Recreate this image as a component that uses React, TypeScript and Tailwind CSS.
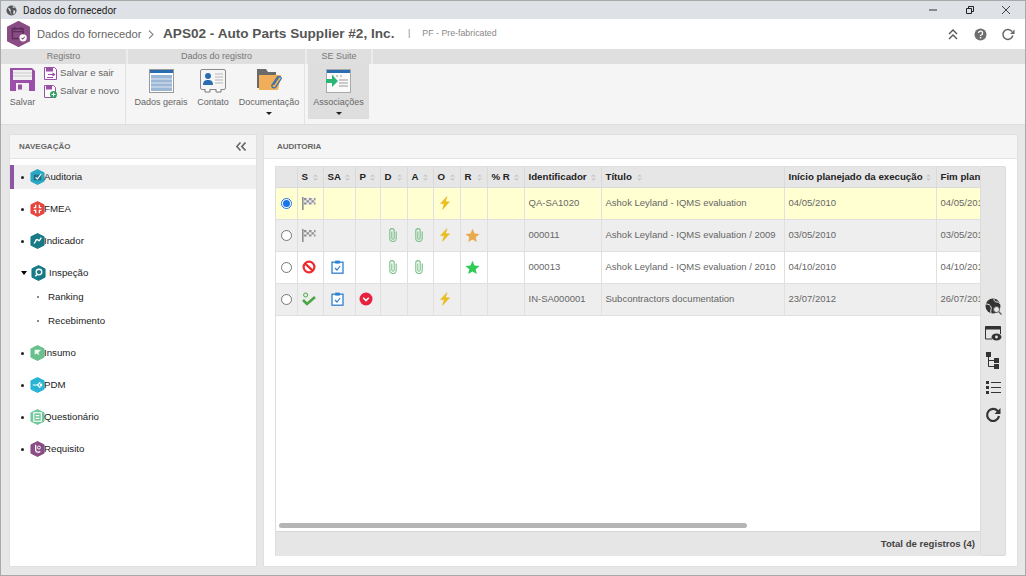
import React from "react";

const Hex = ({ c, size = 15, children }: { c: string; size?: number; children?: React.ReactNode }) => (
  <svg width={size} height={size + 1} viewBox="0 0 16 17" className="shrink-0">
    <path d="M8 .5 15 4v9l-7 3.5L1 13V4z" fill={c} stroke={c} strokeLinejoin="round" />
    {children}
  </svg>
);

const navIcons: Record<string, React.ReactNode> = {
  Auditoria: (
    <Hex c="#2aa7c4">
      <rect x="4" y="6" width="8" height="6" fill="#1f6f87" />
      <path d="m6 9 2 1.5L12 5" stroke="#fff" strokeWidth="1.2" fill="none" />
    </Hex>
  ),
  FMEA: (
    <Hex c="#e5473f">
      <path d="M6 4v3H4M10 4v3h2M6 13v-3H4M10 13v-3h2" stroke="#fff" strokeWidth="1.4" fill="none" />
    </Hex>
  ),
  Indicador: (
    <Hex c="#177a87">
      <path d="M4 11c2 0 2-5 4-4s1 3 4-2" stroke="#fff" strokeWidth="1.5" fill="none" />
    </Hex>
  ),
  Inspeção: (
    <Hex c="#177a87">
      <circle cx="8.5" cy="7.5" r="3" stroke="#fff" strokeWidth="1.4" fill="none" />
      <path d="M6.5 10 4.5 12" stroke="#fff" strokeWidth="1.5" />
    </Hex>
  ),
  Insumo: (
    <Hex c="#69c08d">
      <path d="M5 5h7l-3 3 1 3-3-2-2 1z" fill="#fff" opacity=".9" />
    </Hex>
  ),
  PDM: (
    <Hex c="#29b4d6">
      <path d="M3 8.5h5M8 8.5l3-3M8 8.5l3 3" stroke="#fff" strokeWidth="1.3" fill="none" />
      <rect x="10.5" y="7" width="2.5" height="3" fill="#fff" />
    </Hex>
  ),
  Questionário: (
    <Hex c="#73c79c">
      <rect x="4" y="4" width="8" height="9" fill="none" stroke="#fff" strokeWidth="1.2" />
      <path d="M6 7h4M6 10h4" stroke="#fff" strokeWidth="1.2" />
    </Hex>
  ),
  Requisito: (
    <Hex c="#8a4d85">
      <path d="M6 4v6a3 3 0 0 0 5 1" stroke="#fff" strokeWidth="1.4" fill="none" />
      <circle cx="9.5" cy="7" r="1.6" fill="none" stroke="#fff" strokeWidth="1" />
    </Hex>
  ),
};

const Flag = () => (
  <svg width="15" height="15" viewBox="0 0 15 15" className="ml-[-3px]">
    <rect x="1" y="1" width="1.6" height="13" fill="#8f8f8f" />
    <path d="M3 1.5h11.5v7H3z" fill="#ececec" />
    <path d="M3 2h2.5v2.2H3zM8 2h2.5v2.2H8zM13 2h1.5v2.2H13zM5.5 4.2H8v2.2H5.5zM10.5 4.2H13v2.2h-2.5zM3 6.4h2.5v2.2H3zM8 6.4h2.5v2.2H8zM13 6.4h1.5v2.2H13z" fill="#929292" />
  </svg>
);
const Bolt = () => (
  <svg width="14" height="14" viewBox="0 0 14 14" className="ml-[-3px]">
    <path d="M9 .5 2.5 7.5h3.8L4.5 13.5 11.5 5.8H7.5z" fill="#eec01a" stroke="#d9a90c" strokeWidth=".4" />
  </svg>
);
const Clip = () => (
  <svg width="8" height="14" viewBox="0 0 8 14" className="ml-[-2px]">
    <path d="M2.8 3.5V10a1.2 1.2 0 0 0 2.4 0V2.8a2.2 2.2 0 0 0-4.4 0V10.3a3.2 3.2 0 0 0 6.4 0V3.5" fill="none" stroke="#79c188" strokeWidth="1.1" />
  </svg>
);
const Star = ({ c }: { c: string }) => (
  <svg width="15" height="15" viewBox="0 0 15 15" className="ml-[-3px]">
    <path d="m7.5.8 2 4.6 5 .5-3.8 3.3 1.1 4.9-4.3-2.6-4.3 2.6 1.1-4.9L.5 5.9l5-.5z" fill={c} />
  </svg>
);
const Ban = () => (
  <svg width="14" height="14" viewBox="0 0 14 14" className="ml-[-3px]">
    <circle cx="7" cy="7" r="5.4" fill="#fff" stroke="#ee2b2f" strokeWidth="2.2" />
    <path d="m3.2 3.6 7.2 6.8" stroke="#ee2b2f" strokeWidth="2.2" />
  </svg>
);
const CheckDone = () => (
  <svg width="14" height="14" viewBox="0 0 14 14" className="ml-[-3px]">
    <circle cx="3.6" cy="3" r="2" fill="none" stroke="#4aa544" strokeWidth="1" />
    <path d="m1 8 4 4 8-7" fill="none" stroke="#4aa544" strokeWidth="2.6" />
  </svg>
);
const Clipboard = () => (
  <svg width="13" height="14" viewBox="0 0 13 14" className="ml-[-3px]">
    <rect x="1" y="2.2" width="11" height="11" fill="#fff" stroke="#2f80cf" strokeWidth="1.3" />
    <rect x="4.2" y=".6" width="4.6" height="3" fill="#2f80cf" />
    <path d="m4 8 2 2 3.2-4" fill="none" stroke="#2f80cf" strokeWidth="1.2" />
  </svg>
);
const RedDown = () => (
  <svg width="14" height="14" viewBox="0 0 14 14" className="ml-[-3px]">
    <circle cx="7" cy="7" r="6.5" fill="#e8213f" />
    <path d="m4.2 5.8 2.8 2.8 2.8-2.8" fill="none" stroke="#fff" strokeWidth="1.6" />
  </svg>
);

const Sort = () => (
  <svg width="7" height="7" viewBox="0 0 7 7" className="shrink-0">
    <path d="M3.5.5 6 2.6H1zM3.5 6.5 1 4.4h5z" fill="#c4c4c4" />
  </svg>
);

const cols = [
  { t: "", w: 21 },
  { t: "S", w: 26 },
  { t: "SA", w: 32 },
  { t: "P", w: 25 },
  { t: "D", w: 27 },
  { t: "A", w: 26 },
  { t: "O", w: 27 },
  { t: "R", w: 27 },
  { t: "% R", w: 37 },
  { t: "Identificador", w: 77 },
  { t: "Título", w: 183 },
  { t: "Início planejado da execução", w: 152 },
  { t: "Fim planejado", w: 90 },
];

const rows: { icons: (React.ReactNode | null)[]; id: string; title: string; a: string; b: string; bg: string; sel?: boolean }[] = [
  { icons: [<Flag />, null, null, null, null, <Bolt />, null, null], id: "QA-SA1020", title: "Ashok Leyland - IQMS evaluation", a: "04/05/2010", b: "04/05/2010", bg: "bg-[#ffffd2]", sel: true },
  { icons: [<Flag />, null, null, <Clip />, <Clip />, <Bolt />, <Star c="#e8a94f" />, null], id: "000011", title: "Ashok Leyland - IQMS evaluation / 2009", a: "03/05/2010", b: "03/05/2010", bg: "bg-[#eeeeee]" },
  { icons: [<Ban />, <Clipboard />, null, <Clip />, <Clip />, null, <Star c="#2ecc55" />, null], id: "000013", title: "Ashok Leyland - IQMS evaluation / 2010", a: "04/10/2010", b: "04/10/2010", bg: "bg-white" },
  { icons: [<CheckDone />, <Clipboard />, <RedDown />, null, null, <Bolt />, null, null], id: "IN-SA000001", title: "Subcontractors documentation", a: "23/07/2012", b: "26/07/2012", bg: "bg-[#eeeeee]" },
];

const Radio = ({ on }: { on?: boolean }) => (
  <span className={`block w-[11px] h-[11px] rounded-full border bg-white ${on ? "border-[#1a73e8] flex items-center justify-center" : "border-[#767676]"}`}>
    {on && <span className="block w-[7px] h-[7px] rounded-full bg-[#1a73e8]" />}
  </span>
);

const NavItem = ({ label, active, open }: { label: string; active?: boolean; open?: boolean }) => (
  <div className={`h-6 flex items-center text-[9.7px] text-[#222] ${active ? "bg-[#efefef] border-l-4 border-[#8e55a5]" : "border-l-4 border-transparent"}`}>
    {open ? (
      <span className="ml-[7px] mr-[4px] h-0 w-[6px] border-x-[3px] border-t-[4px] border-x-transparent border-t-black" />
    ) : (
      <span className="ml-[7px] w-[3px] h-[3px] bg-[#222] rounded-full mr-[6px]" />
    )}
    {navIcons[label]}
    <span className={open ? "ml-[3px]" : "ml-[-1px]"}>{label}</span>
  </div>
);

const RibbonLabel = ({ children, w }: { children: React.ReactNode; w: string }) => (
  <div className={`h-[15px] bg-[#dfdfdf] text-[9px] text-[#777] flex items-center justify-center mr-[2px] ${w}`}>{children}</div>
);

const th = "border-r border-b border-[#dadada] px-[4px] pt-[2px] text-left font-bold text-[#222] whitespace-nowrap overflow-hidden";
const td = "border-r border-b border-[#e0e0e0] px-[4px] text-[#666] whitespace-nowrap overflow-hidden";

export default function App() {
  return (
    <div className="w-[1026px] h-[576px] overflow-hidden bg-[#e7e7e7] flex flex-col border border-[#a9a9a9] text-[#444]" style={{ fontFamily: '"Liberation Sans", Arial, sans-serif' }}>
      {/* Title bar */}
      <div className="h-[18px] shrink-0 bg-[#dee1e6] flex items-center pl-[5px] text-[10px] text-[#222]" style={{ fontFamily: 'Roboto, sans-serif' }}>
        <svg width="11" height="11" viewBox="0 0 12 12" className="mr-[6px]">
          <circle cx="6" cy="6" r="5.5" fill="#555" />
          <path d="M2 3c2 0 2 1 3 2s-1 2 0 3 1 2 1 3M8 1c-1 1-1 2 0 2s2 0 3 1M8 6l2 0 0 3-2 1z" fill="#dee1e6" />
        </svg>
        <span className="flex-1">Dados do fornecedor</span>
        <svg width="110" height="18" viewBox="0 0 110 18">
          <path d="M14 9h8" stroke="#333" />
          <path d="M51.5 7.5h5v5h-5zM53.5 7V5.5h5v5H57" fill="none" stroke="#222" />
          <path d="m87 5 8 8M95 5l-8 8" stroke="#333" strokeWidth=".9" />
        </svg>
      </div>

      {/* Header */}
      <div className="h-[30px] shrink-0 bg-white flex items-center pl-[5px] pr-[10px]">
        <Hex c="#8a4c84" size={25}>
          <rect x="4" y="5" width="7" height="6.5" fill="none" stroke="#5f2f5c" strokeWidth="1" />
          <path d="M4 7h7M5.5 4v2M9.5 4v2" stroke="#5f2f5c" strokeWidth=".8" />
          <circle cx="11" cy="11" r="2.4" fill="#fff" />
          <path d="m10 11 .8.8 1.3-1.5" stroke="#8a4c84" strokeWidth=".7" fill="none" />
        </Hex>
        <span className="ml-[6px] w-[107px] whitespace-nowrap text-[11.2px] text-[#666]">Dados do fornecedor</span>
        <svg width="6" height="9" viewBox="0 0 6 9" className="ml-[4px]"><path d="m1 .5 4 4-4 4" fill="none" stroke="#888" strokeWidth="1.1" /></svg>
        <span className="ml-[9px] w-[232px] whitespace-nowrap text-[13.6px] font-bold text-[#555]">APS02 - Auto Parts Supplier #2, Inc.</span>
        <span className="ml-[13px] text-[9px] text-[#888]">|</span>
        <span className="ml-[12px] text-[8.8px] text-[#888]">PF - Pre-fabricated</span>
        <div className="ml-auto flex items-center">
          <svg width="10" height="11" viewBox="0 0 10 11"><path d="m1 5 4-4 4 4M1 10l4-4 4 4" fill="none" stroke="#555" strokeWidth="1.4" /></svg>
          <svg width="13" height="13" viewBox="0 0 13 13" className="ml-[16px]">
            <circle cx="6.5" cy="6.5" r="6" fill="#6f6f6f" />
            <path d="M4.6 5a2 2 0 1 1 2.6 2c-.5.2-.7.5-.7 1" fill="none" stroke="#fff" strokeWidth="1.3" />
            <rect x="5.8" y="9" width="1.4" height="1.4" fill="#fff" />
          </svg>
          <svg width="14" height="13" viewBox="0 0 14 13" className="ml-[14px]">
            <path d="M11 3.5a5 5 0 1 0 .8 4" fill="none" stroke="#666" strokeWidth="1.5" />
            <path d="M13.5 1.5v4.5H9z" fill="#666" />
          </svg>
        </div>
      </div>

      {/* Ribbon */}
      <div className="h-[76px] shrink-0 bg-[#f5f5f5] border-b border-[#dcdcdc]">
        <div className="flex bg-[#ececec]">
          <RibbonLabel w="w-[125px]">Registro</RibbonLabel>
          <RibbonLabel w="w-[177px]">Dados do registro</RibbonLabel>
          <RibbonLabel w="w-[64px]">SE Suite</RibbonLabel>
          <div className="h-[15px] flex-1 bg-[#dfdfdf]" />
        </div>
        <div className="flex h-[60px] text-[9px] text-[#666]">
          <div className="w-[125px] mr-[2px] border-r border-[#e3e3e3] flex pl-[9px] pt-[3px]">
            <div className="flex flex-col items-center w-[25px]">
              <svg width="25" height="25" viewBox="0 0 25 25">
                <path d="M0 1h22l3 3v20H0z" fill="#9a4fa8" />
                <rect x="3" y="3" width="19" height="10" fill="#f0f0f0" />
                <path d="M3 6h19M3 9h19" stroke="#ccc" />
                <rect x="6" y="16" width="13" height="8" fill="#f0f0f0" />
                <rect x="8" y="17.5" width="4" height="5" fill="#9a4fa8" />
              </svg>
              <span className="mt-[4px]">Salvar</span>
            </div>
            <div className="ml-[9px] flex flex-col gap-[5px] text-[9.7px]">
              <div className="flex items-center h-[13px]">
                <svg width="13" height="13" viewBox="0 0 13 13">
                  <path d="M.5.5h10l2 2v10H.5z" fill="#fff" stroke="#9a4fa8" />
                  <rect x="2" y="1" width="7" height="3.5" fill="#9a4fa8" />
                  <path d="M4 7.5h6M8.5 6 10.5 7.5 8.5 9M9 10.5H3" stroke="#9a4fa8" strokeWidth="1.2" fill="none" />
                </svg>
                <span className="ml-[3px] whitespace-nowrap">Salvar e sair</span>
              </div>
              <div className="flex items-center h-[13px]">
                <svg width="13" height="13" viewBox="0 0 13 13">
                  <path d="M.5.5h9l2 2v10H.5z" fill="#fff" stroke="#9a4fa8" />
                  <rect x="2" y="1" width="6" height="3.5" fill="#9a4fa8" />
                  <circle cx="9.5" cy="9.5" r="3.5" fill="#2ba35b" />
                  <path d="M7.5 9.5h4M9.5 7.5v4" stroke="#fff" />
                </svg>
                <span className="ml-[3px] whitespace-nowrap">Salvar e novo</span>
              </div>
            </div>
          </div>
          <div className="w-[177px] mr-[2px] border-r border-[#e3e3e3] flex pl-[7px]">
            <div className="w-[52px] flex flex-col items-center pt-[5px] whitespace-nowrap">
              <svg width="25" height="24" viewBox="0 0 25 24">
                <rect x=".5" y=".5" width="24" height="23" fill="#fff" stroke="#9a9a9a" />
                <rect x="1" y="1" width="23" height="3" fill="#2a6cb0" />
                <rect x="2" y="6" width="21" height="16" fill="#9cb6d6" />
                <path d="M2 10h21M2 14h21M2 18h21" stroke="#dfe8f2" />
              </svg>
              <span className="mt-[3px]">Dados gerais</span>
            </div>
            <div className="w-[52px] flex flex-col items-center pt-[5px]">
              <svg width="26" height="24" viewBox="0 0 26 24">
                <rect x=".5" y=".5" width="25" height="20" rx="1.5" fill="#f5f5f5" stroke="#8a8a8a" />
                <circle cx="8" cy="7" r="3" fill="#2a6cb0" />
                <path d="M3 16c0-4 2-5 5-5s5 1 5 5z" fill="#2a6cb0" />
                <path d="M15 5h8M15 8h8M15 11h8M15 14h8" stroke="#ccc" strokeWidth="1.5" />
                <path d="M5 20v3h5v-3M16 20v3h5v-3" fill="#fff" stroke="#777" />
              </svg>
              <span className="mt-[3px]">Contato</span>
            </div>
            <div className="w-[60px] flex flex-col items-center pt-[3px]">
              <svg width="26" height="26" viewBox="0 0 26 26">
                <path d="M1 2h9l2 3h8v16H1z" fill="#6a6a6a" />
                <path d="M3 8h22l-3 15H3z" fill="#f0ae58" />
                <path d="M22 9l-6 9a2.2 2.2 0 0 0 3.5 2.4l5.5-8.4a1.4 1.4 0 0 0-2.5-1.5L17.5 18" fill="none" stroke="#2a6cb0" strokeWidth="1.2" />
              </svg>
              <span className="mt-[3px] whitespace-nowrap">Documentação</span>
              <span className="mt-[2px] h-0 w-0 border-x-[3px] border-t-[3px] border-x-transparent border-t-[#222]" />
            </div>
          </div>
          <div className="w-[64px] pl-[1px]">
            <div className="w-[61px] h-[55px] bg-[#dedede] flex flex-col items-center pt-[5px]">
              <svg width="25" height="24" viewBox="0 0 25 24">
                <rect x=".5" y=".5" width="24" height="23" fill="#fafafa" stroke="#aaa" />
                <rect x="1" y="1" width="23" height="3" fill="#2a6cb0" />
                <path d="M6 7h2M10 7h2M14 7h2M13 11h9M13 14h9M13 17h9" stroke="#999" />
                <path d="M0 10h6V6l6 6-6 6v-4H0z" fill="#2bb673" />
              </svg>
              <span className="mt-[3px]">Associações</span>
              <span className="mt-[2px] h-0 w-0 border-x-[3px] border-t-[3px] border-x-transparent border-t-[#222]" />
            </div>
          </div>
        </div>
      </div>

      {/* Main */}
      <div className="flex-1 min-h-0 flex pl-[9px] pr-[8px] pt-[10px] pb-[9px] gap-[8px]">
        {/* Nav */}
        <aside className="w-[246px] shrink-0 bg-white flex flex-col shadow-[0_0_1px_#bbb]">
          <div className="h-[24px] shrink-0 bg-[#f5f5f5] border-b border-[#e3e3e3] flex items-center justify-between pl-[9px] pr-[10px]">
            <span className="text-[8px] font-bold text-[#666]">NAVEGAÇÃO</span>
            <svg width="10" height="9" viewBox="0 0 10 9"><path d="M4.5.5.8 4.5l3.7 4M9.5.5 5.8 4.5l3.7 4" fill="none" stroke="#666" strokeWidth="1.6" /></svg>
          </div>
          <div className="flex flex-col pt-[6px] gap-[8px]">
            <NavItem label="Auditoria" active />
            <NavItem label="FMEA" />
            <NavItem label="Indicador" />
            <div>
              <NavItem label="Inspeção" open />
              <div className="h-6 flex items-center text-[9.7px] text-[#222] pl-[27px]"><span className="w-[2px] h-[2px] bg-[#888] mr-[9px]" />Ranking</div>
              <div className="h-6 flex items-center text-[9.7px] text-[#222] pl-[27px]"><span className="w-[2px] h-[2px] bg-[#888] mr-[9px]" />Recebimento</div>
            </div>
            <NavItem label="Insumo" />
            <NavItem label="PDM" />
            <NavItem label="Questionário" />
            <NavItem label="Requisito" />
          </div>
        </aside>

        {/* Content */}
        <section className="flex-1 min-w-0 bg-white flex flex-col shadow-[0_0_1px_#bbb]">
          <div className="h-[24px] shrink-0 bg-[#f5f5f5] border-b border-[#e3e3e3] flex items-center pl-[13px]">
            <span className="text-[8px] font-bold text-[#666]">AUDITORIA</span>
          </div>
          <div className="flex-1 min-h-0 flex pl-[11px] pr-[10px] pt-[7px] pb-[10px]">
            <div className="w-[705px] shrink-0 flex flex-col border-t border-l border-[#dedede]">
              <div className="flex-1 min-h-0 overflow-hidden relative">
                <table className="table-fixed border-collapse text-[9.5px]" style={{ width: 730 }}>
                  <colgroup>
                    {cols.map((c, i) => <col key={i} style={{ width: c.w }} />)}
                  </colgroup>
                  <thead>
                    <tr className="h-[20px] bg-[#e6e6e6]">
                      {cols.map((c, i) => (
                        <th key={i} className={th}>
                          {c.t && (
                            <span className="flex items-center justify-between text-[9.7px]">
                              <span>{c.t}</span>
                              {i < 10 || i === 11 ? <Sort /> : null}
                              {i === 10 && <span className="flex-1 ml-[4px]"><Sort /></span>}
                            </span>
                          )}
                        </th>
                      ))}
                    </tr>
                  </thead>
                  <tbody>
                    {rows.map((r, ri) => (
                      <tr key={ri} className={`h-[32px] ${r.bg}`}>
                        <td className="border-r border-b border-[#e0e0e0] pl-[5px]"><Radio on={r.sel} /></td>
                        {r.icons.map((ic, i) => (
                          <td key={i} className="border-r border-b border-[#e0e0e0]">
                            <span className="flex items-center justify-center">{ic}</span>
                          </td>
                        ))}
                        <td className={td}>{r.id}</td>
                        <td className={td}>{r.title}</td>
                        <td className={td}>{r.a}</td>
                        <td className={td}>{r.b}</td>
                      </tr>
                    ))}
                  </tbody>
                </table>
                <div className="absolute left-[3px] bottom-[3px] w-[468px] h-[5px] rounded bg-[#b5b5b5]" />
              </div>
              <div className="h-[25px] shrink-0 bg-[#e6e6e6] border-t border-[#d8d8d8] flex items-center justify-end pr-[5px] text-[9.6px] font-bold text-[#444]">
                Total de registros (4)
              </div>
            </div>
            <div className="w-[26px] shrink-0 bg-[#e6e6e6] border border-[#dcdcdc] rounded-[2px] flex flex-col items-center pt-[131px] gap-[11px]">
              <span className="h-4 flex items-center">
                <svg width="17" height="17" viewBox="0 0 17 17">
                  <circle cx="8" cy="8" r="7.5" fill="#333" />
                  <path d="M1 6c3 0 4 1 5 3s-1 3 0 6M9 1c0 2 1 3 3 3s2 0 3 2" stroke="#e6e6e6" fill="none" />
                  <circle cx="11.5" cy="11.5" r="3" fill="#e6e6e6" stroke="#555" />
                  <path d="m14 14 2.5 2.5" stroke="#555" strokeWidth="1.3" />
                </svg>
              </span>
              <span className="h-4 flex items-center">
                <svg width="17" height="15" viewBox="0 0 17 15">
                  <path d="M.5 13V.5h15V8" fill="none" stroke="#333" />
                  <path d="M.5.5h15v3H.5z" fill="#333" />
                  <path d="M.5 13H7" stroke="#333" />
                  <ellipse cx="11.5" cy="11" rx="5" ry="3.5" fill="#333" />
                  <circle cx="11.5" cy="11" r="1.4" fill="#e6e6e6" />
                </svg>
              </span>
              <span className="h-4 flex items-center">
                <svg width="14" height="17" viewBox="0 0 14 17">
                  <rect x="0" y="0" width="5" height="5" fill="#333" />
                  <rect x="8" y="6" width="5" height="5" fill="#333" />
                  <rect x="8" y="12" width="5" height="5" fill="#333" />
                  <path d="M2.5 5v9.5H8M2.5 8.5H8" fill="none" stroke="#333" />
                </svg>
              </span>
              <span className="h-4 flex items-center">
                <svg width="15" height="13" viewBox="0 0 15 13">
                  <path d="M0 0h3v3H0zM0 5h3v3H0zM0 10h3v3H0z" fill="#333" />
                  <path d="M5 1.5h10M5 6.5h10M5 11.5h10" stroke="#333" strokeWidth="1.2" />
                </svg>
              </span>
              <span className="h-4 flex items-center mt-[1px]">
                <svg width="16" height="16" viewBox="0 0 16 16">
                  <path d="M13 4.5a6 6 0 1 0 1 4.5" fill="none" stroke="#333" strokeWidth="2.2" />
                  <path d="M15.5 1v6H9.5z" fill="#333" />
                </svg>
              </span>
            </div>
          </div>
        </section>
      </div>
    </div>
  );
}
